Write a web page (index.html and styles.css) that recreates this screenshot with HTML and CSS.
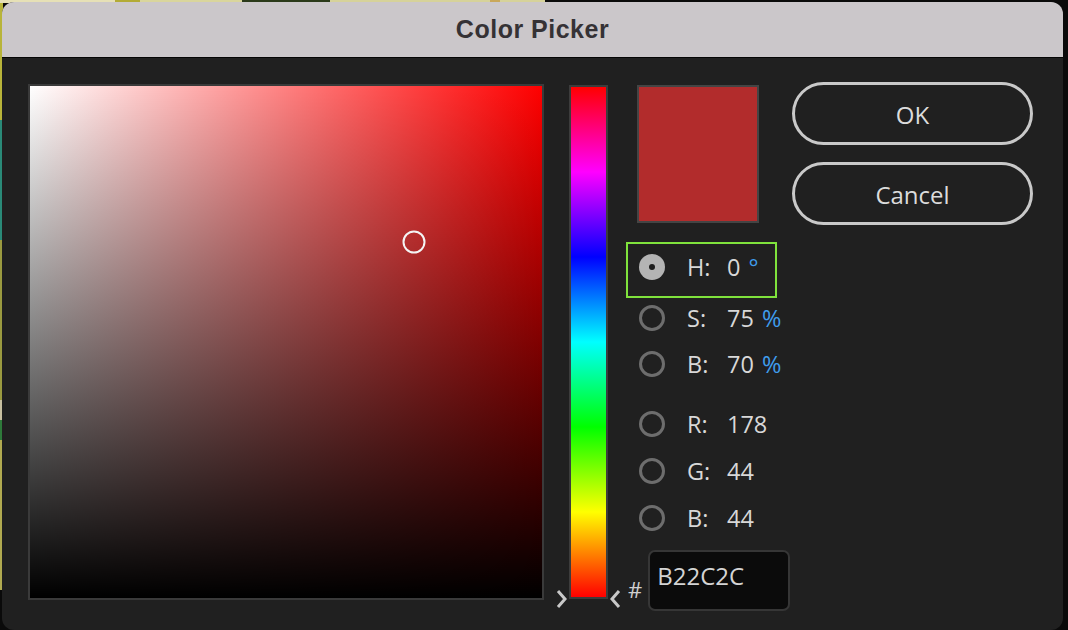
FILE: index.html
```html
<!DOCTYPE html>
<html lang="en">
<head>
<meta charset="utf-8">
<title>Color Picker</title>
<link rel="stylesheet" href="styles.css">
</head>
<body>
<div class="dialog">
  <div class="titlebar">Color Picker</div>
  <div class="content">
    <div class="field">
      <div class="cursor"></div>
    </div>
    <div class="slider">
      <svg class="chev chev-left" width="12" height="22" viewBox="0 0 12 22"><polyline points="2,3 9,11 2,19" fill="none" stroke="#c9c9c9" stroke-width="3"/></svg>
      <svg class="chev chev-right" width="12" height="22" viewBox="0 0 12 22"><polyline points="10,3 3,11 10,19" fill="none" stroke="#c9c9c9" stroke-width="3"/></svg>
    </div>
    <div class="controls">
      <div class="toprow">
        <div class="swatch"></div>
        <div class="buttons">
          <button class="btn">OK</button>
          <button class="btn">Cancel</button>
        </div>
      </div>
      <div class="hbox">
        <div class="row">
          <span class="radio selected"></span>
          <span class="label">H:</span>
          <span class="value">0 <span class="unit">°</span></span>
        </div>
      </div>
      <div class="group group-hsb">
        <div class="row">
          <span class="radio"></span>
          <span class="label">S:</span>
          <span class="value">75 <span class="unit">%</span></span>
        </div>
        <div class="row">
          <span class="radio"></span>
          <span class="label">B:</span>
          <span class="value">70 <span class="unit">%</span></span>
        </div>
      </div>
      <div class="group group-rgb">
        <div class="row">
          <span class="radio"></span>
          <span class="label">R:</span>
          <span class="value">178</span>
        </div>
        <div class="row">
          <span class="radio"></span>
          <span class="label">G:</span>
          <span class="value">44</span>
        </div>
        <div class="row">
          <span class="radio"></span>
          <span class="label">B:</span>
          <span class="value">44</span>
        </div>
      </div>
      <div class="hexrow">
        <span class="hash">#</span>
        <div class="hexbox">B22C2C</div>
      </div>
    </div>
  </div>
</div>
</body>
</html>
```

FILE: styles.css
```css
* { box-sizing: border-box; }

html, body {
  margin: 0;
  padding: 0;
}

body {
  width: 1068px;
  height: 630px;
  overflow: hidden;
  font-family: "Open Sans", "Noto Sans", sans-serif;
  background:
    linear-gradient(to right, #e6e0b6 0 115px, #b3ab35 115px 140px, #d9d59c 140px 242px, #2b3a1a 242px 330px, #d6d29a 330px 490px, #c9a85a 490px 500px, #d6d29a 500px 545px, #0a0a0a 545px) top left / 100% 3px no-repeat,
    linear-gradient(to bottom, #b8b43a 0 120px, #2a8a78 120px 240px, #9a9a40 240px 400px, #c8c0a0 400px 420px, #2e7a3a 420px 440px, #b0aa50 440px 590px, #0a0a0a 590px) top left / 3px 100% no-repeat,
    #0a0a0a;
}

.dialog {
  margin: 2px 0 0 2px;
  width: 1061px;
  height: 628px;
  border-radius: 12px;
  overflow: hidden;
  background: #202020;
}

.titlebar {
  height: 56px;
  background: #cbc7ca;
  border-bottom: 1px solid #050505;
  display: flex;
  align-items: center;
  justify-content: center;
  padding-bottom: 1px;
  font-family: "Liberation Sans", Arial, sans-serif;
  font-weight: bold;
  font-size: 25px;
  letter-spacing: 0.5px;
  color: #353235;
}

.content {
  display: flex;
  align-items: flex-start;
  padding: 26px 0 0 26px;
}

.field {
  position: relative;
  width: 516px;
  height: 516px;
  border: 2px solid #3a3a3a;
  background:
    linear-gradient(to bottom, rgba(0,0,0,0), #000),
    linear-gradient(to right, #fff, #f00);
}

.cursor {
  position: absolute;
  left: 384px;
  top: 156px;
  width: 23px;
  height: 23px;
  border: 2px solid #f4f4f4;
  border-radius: 50%;
  transform: translate(-50%, -50%);
}

.slider {
  position: relative;
  margin: 1px 0 0 25px;
  width: 39px;
  height: 514px;
  border: 2px solid #3c3c3c;
  background: linear-gradient(to bottom, #f00 0%, #f0f 16.67%, #00f 33.33%, #0ff 50%, #0f0 66.67%, #ff0 83.33%, #f00 100%);
}

.chev {
  position: absolute;
  bottom: -13px;
}
.chev-left { left: -15px; }
.chev-right { right: -15px; }

.controls {
  margin-left: 18px;
  display: flex;
  flex-direction: column;
}

.toprow {
  display: flex;
  align-items: flex-start;
}

.swatch {
  margin: 1px 0 0 11px;
  width: 122px;
  height: 138px;
  border: 2px solid #444;
  background: #b22c2c;
}

.buttons {
  margin: -2px 0 0 33px;
  display: flex;
  flex-direction: column;
  gap: 17px;
}

.btn {
  width: 241px;
  height: 63px;
  border: 3px solid #c9c9c9;
  border-radius: 32px;
  background: transparent;
  color: #dcdcdc;
  font-family: "Open Sans", "Noto Sans", sans-serif;
  font-size: 24px;
  padding: 2px 0 0;
}

.hbox {
  margin-top: 17px;
  width: 151px;
  height: 56px;
  border: 2px solid #7fe23c;
  padding: 10px 0 0 11px;
}

.row {
  display: flex;
  align-items: center;
  height: 26px;
  font-size: 23.5px;
  line-height: 26px;
  color: #d8d8d8;
}

.group {
  display: flex;
  flex-direction: column;
  padding-left: 13px;
}
.group-hsb { margin-top: 7px; gap: 20px; }
.group-rgb { margin-top: 34px; gap: 21px; }

.radio {
  width: 26px;
  height: 26px;
  border-radius: 50%;
  border: 3px solid #6d6d6d;
  flex: none;
  position: relative;
}
.radio.selected {
  border: none;
  background: #b4b4b4;
}
.radio.selected::after {
  content: "";
  position: absolute;
  left: 10px;
  top: 10px;
  width: 6px;
  height: 6px;
  border-radius: 50%;
  background: #1e1e1e;
}

.label {
  margin-left: 22px;
  width: 40px;
}

.unit {
  color: #3f9ceb;
  margin-left: 2px;
}

.hexrow {
  margin-top: 19px;
  display: flex;
  align-items: flex-end;
}

.hash {
  margin: 0 6px 10px 2px;
  font-size: 22px;
  line-height: 24px;
  color: #cfcfcf;
}

.hexbox {
  width: 142px;
  height: 61px;
  background: #0b0b0b;
  border: 2px solid #363636;
  border-radius: 7px;
  padding: 12px 0 0 7px;
  font-size: 24px;
  line-height: 24px;
  color: #d4d4d4;
}
```
